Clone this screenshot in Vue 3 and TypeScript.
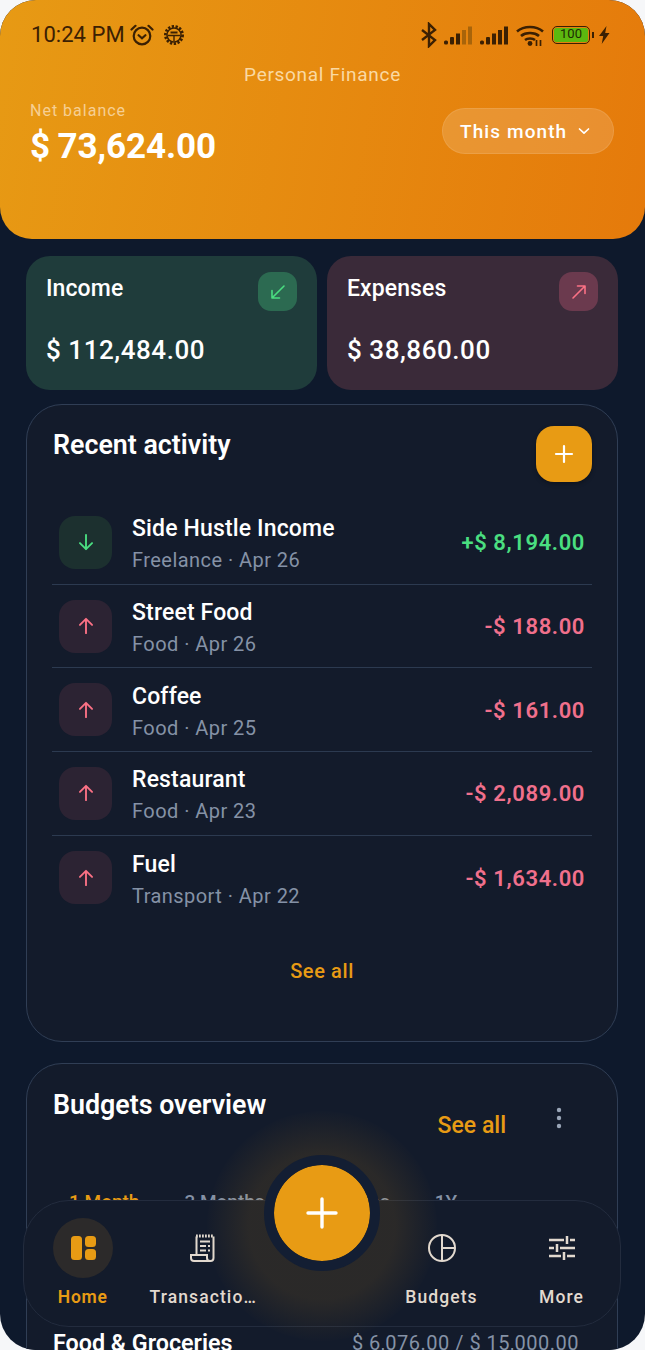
<script setup lang="ts">
interface Tx { name: string; sub: string; amount: string; income: boolean }
const txs: Tx[] = [
  { name: 'Side Hustle Income', sub: 'Freelance · Apr 26', amount: '+$ 8,194.00', income: true },
  { name: 'Street Food', sub: 'Food · Apr 26', amount: '-$ 188.00', income: false },
  { name: 'Coffee', sub: 'Food · Apr 25', amount: '-$ 161.00', income: false },
  { name: 'Restaurant', sub: 'Food · Apr 23', amount: '-$ 2,089.00', income: false },
  { name: 'Fuel', sub: 'Transport · Apr 22', amount: '-$ 1,634.00', income: false },
]
</script>

<template>
  <div class="phone">
    <header class="hero">
      <div class="status">
        <span class="time">10:24 PM</span>
        <svg class="alarm" width="24" height="24" viewBox="0 0 24 24" fill="none" stroke="#3b2003" stroke-width="2.2">
          <circle cx="12" cy="13" r="8.300" />
          <path d="M8.600 12.200 12 15.200l3.400-3M1.500 6.500 5.500 2.800M22.500 6.500l-4-3.700" stroke-linecap="round" />
        </svg>
        <svg class="bug" width="22" height="22" viewBox="0 0 22 22" fill="none" stroke="#3b2003">
          <circle cx="11" cy="11" r="8.600" stroke-width="2.800" stroke-dasharray="2.300 1.500" />
          <circle cx="11" cy="11" r="7" stroke-width="1.500" />
          <path d="M5 11.500h12" stroke-width="1.500" />
          <path d="M11 11.500V17" stroke-width="1.400" />
          <path d="M7.500 8.500h7" stroke-width="2.200" />
        </svg>
        <span class="grow"></span>
        <svg width="18" height="26" viewBox="0 0 18 26" fill="none" stroke="#3b2003" stroke-width="2.400">
          <path d="M2 8l13 10-6 6V2l6 6L2 18" />
        </svg>
        <svg class="sig" width="28" height="19" viewBox="0 0 28 19">
          <rect x="0" y="14.500" width="4" height="4" rx="1.500" fill="#3b2003" />
          <rect x="6" y="11" width="4" height="7.500" rx="1" fill="#3b2003" />
          <rect x="12" y="7.500" width="4" height="11" fill="#3b2003" />
          <rect x="18" y="4" width="4" height="14.500" fill="#a8640a" />
          <rect x="24" y="0.500" width="4" height="18" fill="#a8640a" />
        </svg>
        <svg class="sig s2" width="28" height="19" viewBox="0 0 28 19" fill="#3b2003">
          <rect x="0" y="14.500" width="4" height="4" rx="1.500" />
          <rect x="6" y="11" width="4" height="7.500" rx="1" />
          <rect x="12" y="7.500" width="4" height="11" />
          <rect x="18" y="4" width="4" height="14.500" />
          <rect x="24" y="0.500" width="4" height="18" />
        </svg>
        <svg class="wifi" width="28" height="22" viewBox="0 0 28 22" fill="none" stroke="#3b2003" stroke-width="2.600">
          <path d="M1 7.500c7-6 19-6 26 0M5 12c4.500-4 13.500-4 18 0M9 16c2.500-2 7.500-2 10 0" />
          <circle cx="14" cy="19.500" r="2.400" fill="#3b2003" stroke="none" />
          <path d="M20.500 16v6M24.500 16v6" stroke-width="1.700" />
        </svg>
        <div class="bat"><span>100</span></div>
        <span class="nub"></span>
        <svg width="11" height="18" viewBox="0 0 11 18" fill="#3b2003"><path d="M7.500 0 0 10h4.200l-1.500 8L10.500 7H6.200z" /></svg>
      </div>

      <div class="app-title">Personal Finance</div>

      <div class="hero-row">
        <div>
          <div class="net-label">Net balance</div>
          <div class="net-value">$ 73,624.00</div>
        </div>
        <button class="period">
          This month
          <svg width="14" height="14" viewBox="0 0 14 14" fill="none" stroke="#fff" stroke-width="1.700" stroke-linecap="round" stroke-linejoin="round"><path d="M2.500 5 7 9.200 11.500 5" /></svg>
        </button>
      </div>
    </header>

    <section class="stats">
      <div class="stat income">
        <div class="stat-top">
          <span class="stat-label">Income</span>
          <span class="stat-icon">
            <svg width="20" height="20" viewBox="0 0 20 20" fill="none" stroke="#4ade80" stroke-width="1.600" stroke-linecap="round" stroke-linejoin="round"><path d="M16 4 4 16M4 8.500V16h7.500" /></svg>
          </span>
        </div>
        <div class="stat-value">$ 112,484.00</div>
      </div>
      <div class="stat expense">
        <div class="stat-top">
          <span class="stat-label">Expenses</span>
          <span class="stat-icon">
            <svg width="20" height="20" viewBox="0 0 20 20" fill="none" stroke="#fb7185" stroke-width="1.600" stroke-linecap="round" stroke-linejoin="round"><path d="M4 16 16 4M8.500 4H16v7.500" /></svg>
          </span>
        </div>
        <div class="stat-value">$ 38,860.00</div>
      </div>
    </section>

    <section class="card recent">
      <div class="card-head">
        <h2>Recent activity</h2>
        <button class="add">
          <svg width="22" height="22" viewBox="0 0 22 22" fill="none" stroke="#fff" stroke-width="2.200" stroke-linecap="round"><path d="M11 3v16M3 11h16" /></svg>
        </button>
      </div>
      <ul class="list">
        <li v-for="t in txs" :key="t.name" class="row">
          <span class="tx-icon" :class="t.income ? 'in' : 'out'">
            <svg width="22" height="22" viewBox="0 0 20 20" fill="none" :stroke="t.income ? '#4ade80' : '#fb7185'" stroke-width="1.700" stroke-linecap="round" stroke-linejoin="round">
              <path v-if="t.income" d="M10 3.500v13M4.500 11l5.500 5.500 5.500-5.500" />
              <path v-else d="M10 16.500v-13M4.500 9 10 3.500 15.500 9" />
            </svg>
          </span>
          <div class="tx-text">
            <div class="tx-name">{{ t.name }}</div>
            <div class="tx-sub">{{ t.sub }}</div>
          </div>
          <div class="tx-amt" :class="t.income ? 'pos' : 'neg'">{{ t.amount }}</div>
        </li>
      </ul>
      <div class="see-all">See all</div>
    </section>

    <section class="card budgets">
      <div class="b-head">
        <h2>Budgets overview</h2>
        <span class="b-see">See all</span>
        <svg class="dots" width="6" height="24" viewBox="0 0 6 24" fill="#9aa6b8"><circle cx="3" cy="4" r="2.200" /><circle cx="3" cy="12" r="2.200" /><circle cx="3" cy="20" r="2.200" /></svg>
      </div>
      <div class="tabs">
        <span class="tab on">1 Month</span>
        <span class="tab">3 Months</span>
        <span class="tab">6 Months</span>
        <span class="tab">1Y</span>
      </div>
      <div class="b-row">
        <span class="b-name">Food &amp; Groceries</span>
        <span class="b-amt">$ 6,076.00 / $ 15,000.00</span>
      </div>
    </section>

    <nav class="nav">
      <div class="nav-item first">
        <span class="nav-icon active">
          <svg width="26" height="26" viewBox="0 0 26 26" fill="#e89b14">
            <rect x="1" y="1" width="11" height="24" rx="3.500" />
            <rect x="15" y="1" width="11" height="11" rx="3.500" />
            <rect x="15" y="14" width="11" height="11" rx="3.500" />
          </svg>
        </span>
        <span class="nav-label on">Home</span>
      </div>
      <div class="nav-item second">
        <span class="nav-icon">
          <svg width="26" height="28" viewBox="0 0 26 28" fill="none" stroke="#e2d9cf" stroke-width="2">
            <path d="M6.500 2.500V21M23.500 2.500V24a3 3 0 0 1-3 3H4a3 3 0 0 1-3-3v-3h16v3a3 3 0 0 0 3 3" />
            <path d="M6 2h18" stroke-width="3" stroke-dasharray="1.800 1.200" />
            <path d="M10 7.500h10M10 12h6M18 12h2M10 16.500h6M18 16.500h2" />
          </svg>
        </span>
        <span class="nav-label">Transactio…</span>
      </div>
      <div class="nav-gap"></div>
      <div class="nav-item third">
        <span class="nav-icon">
          <svg width="30" height="30" viewBox="0 0 30 30" fill="none" stroke="#e2d9cf" stroke-width="2">
            <circle cx="15" cy="15" r="13" />
            <path d="M15 2v26M15 15h13" />
          </svg>
        </span>
        <span class="nav-label">Budgets</span>
      </div>
      <div class="nav-item fourth">
        <span class="nav-icon">
          <svg width="28" height="26" viewBox="0 0 28 26" fill="none" stroke="#e2d9cf" stroke-width="2.500">
            <path d="M1 5h15M22 5h5M19 1v8M1 13h5M12 13h15M9 9v8M1 21h12M19 21h8M16 17v8" />
          </svg>
        </span>
        <span class="nav-label">More</span>
      </div>
    </nav>

    <div class="fab-glow"></div>
    <button class="fab">
      <svg width="36" height="36" viewBox="0 0 36 36" fill="none" stroke="#fff" stroke-width="3.400" stroke-linecap="round"><path d="M18 4v28M4 18h28" /></svg>
    </button>
  </div>
</template>

<style scoped>
.phone {
  position: relative;
  width: 645px;
  height: 1350px;
  overflow: hidden;
  border-radius: 36px;
  background: #0e192c;
  font-family: Roboto, "Liberation Sans", sans-serif;
  color: #fff;
}
.hero {
  height: 239px;
  box-sizing: border-box;
  padding: 20px 35px 0 30px;
  border-radius: 0 0 32px 32px;
  background: linear-gradient(100deg, #e79a14 0%, #e57a0b 100%);
}
.status { display: flex; align-items: center; height: 30px; color: #3b2003; }
.time { font-size: 22px; line-height: 30px; margin-left: 1px; letter-spacing: 0.05px; }
.alarm { margin-left: 5px; }
.bug { margin-left: 9px; }
.grow { flex: 1; }
.sig { margin-left: 6px; }
.sig.s2 { margin-left: 8px; }
.wifi { margin-left: 8px; }
.bat {
  margin-left: 8px;
  width: 38px;
  height: 18px;
  box-sizing: border-box;
  border: 1.800px solid #3b2003;
  border-radius: 5px;
  padding: 1px;
  display: flex;
}
.bat span {
  flex: 1;
  background: #5cb80f;
  border-radius: 2px;
  color: #1d2b04;
  font-size: 13px;
  line-height: 12px;
  text-align: center;
}
.nub { width: 2px; height: 6px; background: #3b2003; margin: 0 5px 0 2px; }
.app-title {
  margin-top: 12px;
  text-align: center;
  margin-right: -5px;
  font-size: 19px;
  line-height: 26px;
  letter-spacing: 0.7px;
  color: #fad9a3;
}
.hero-row { display: flex; justify-content: space-between; align-items: flex-start; }
.net-label {
  margin-top: 13px;
  font-size: 16px;
  line-height: 20px;
  letter-spacing: 1px;
  color: #f6cf94;
}
.net-value { margin-top: 4px; font-size: 35px; line-height: 44px; font-weight: 700; letter-spacing: -0.1px; word-spacing: -1px; }
.period {
  display: flex;
  align-items: center;
  gap: 10px;
  width: 172px;
  height: 46px;
  box-sizing: border-box;
  margin: 20px -4px 0 0;
  padding: 0 17px;
  border: 1px solid rgba(255, 255, 255, 0.1);
  border-radius: 23px;
  background: rgba(255, 255, 255, 0.15);
  color: #fff;
  font: 500 19px Roboto, sans-serif;
  letter-spacing: 1.1px;
  white-space: nowrap;
}
.stats { display: flex; gap: 10px; margin: 17px 27px 0 26px; }
.stat { flex: 1; height: 134px; box-sizing: border-box; padding: 16px 20px; border-radius: 24px; }
.income { background: #1f3c3b; }
.expense { background: #3a2a39; }
.stat-top { display: flex; justify-content: space-between; align-items: flex-start; }
.stat-label { margin-top: 1px; font-size: 23px; line-height: 32px; font-weight: 500; letter-spacing: 0.1px; }
.stat-icon {
  display: flex;
  align-items: center;
  justify-content: center;
  width: 39px;
  height: 39px;
  border-radius: 13px;
}
.income .stat-icon { background: #2c6a51; }
.expense .stat-icon { background: #6b3a4e; }
.stat-value { margin-top: 21px; font-size: 26px; line-height: 36px; font-weight: 500; letter-spacing: 0.55px; }
.card {
  box-sizing: border-box;
  margin: 0 27px 0 26px;
  border: 1.500px solid #303e55;
  border-radius: 36px;
  background: #131b2b;
}
.recent { height: 638px; margin-top: 14px; padding: 21px 25px 0 25px; }
.card-head { display: flex; justify-content: space-between; align-items: flex-start; }
h2 { margin: 1px 0 0 1px; font-size: 26.800px; line-height: 38px; font-weight: 600; }
.card-head h2 { margin-top: 0; }
.add {
  width: 56px;
  height: 56px;
  border: 0;
  border-radius: 18px;
  background: #e89b14;
  display: flex;
  align-items: center;
  justify-content: center;
  box-shadow: 0 2px 4px rgba(0, 0, 0, 0.3);
}
.list { list-style: none; margin: 19px 0 0; padding: 0; }
.row {
  display: flex;
  align-items: center;
  height: 83.700px;
  box-sizing: border-box;
  padding: 0 7px 0 7px;
  border-bottom: 1.500px solid #2c3a50;
}
.row:last-child { border-bottom: 0; }
.tx-icon {
  display: flex;
  align-items: center;
  justify-content: center;
  width: 53px;
  height: 53px;
  border-radius: 16px;
  flex: none;
}
.tx-icon.in { background: #1c302f; }
.tx-icon.out { background: #2c2333; }
.tx-text { margin-left: 20px; flex: 1; padding-top: 2px; }
.tx-name { font-size: 23px; line-height: 30px; font-weight: 500; letter-spacing: 0.15px; margin-top: 1px; }
.tx-sub { margin-top: 3px; font-size: 20px; line-height: 26px; color: #8592a6; letter-spacing: 0.45px; }
.tx-amt { padding-top: 1px; font-size: 22px; font-weight: 600; letter-spacing: 0.6px; }
.pos { color: #4ade80; }
.neg { color: #f0708c; }
.see-all {
  margin-top: 39px;
  text-align: center;
  font-size: 20px;
  line-height: 26px;
  font-weight: 500;
  letter-spacing: 0.6px;
  color: #e89b14;
}
.budgets { height: 400px; margin-top: 21px; padding: 21px 25px 0 25px; }
.b-head { display: flex; align-items: flex-start; }
.b-head h2 { flex: 1; }
.b-see { margin: 25px 50px 0 0; font-size: 23px; line-height: 32px; font-weight: 500; color: #e89b14; }
.dots { margin: 21px 30px 0 0; }
.tabs { display: flex; margin-top: 47px; padding-left: 17px; }
.tab { font-size: 19px; line-height: 26px; font-weight: 500; color: #8592a6; margin-right: 45px; white-space: nowrap; }
.tab.on { color: #e89b14; }
.b-row { display: flex; justify-content: space-between; margin-top: 113px; }
.b-name { margin-left: 1px; font-size: 23.300px; line-height: 30px; font-weight: 600; }
.b-amt { font-size: 20px; line-height: 30px; color: #8592a6; letter-spacing: 0.5px; margin-right: 13px; }
.nav {
  position: absolute;
  left: 23px;
  top: 1200px;
  width: 598px;
  height: 127px;
  box-sizing: border-box;
  display: flex;
  border: 1.500px solid #232c3e;
  border-radius: 46px;
  background: #131b2b;
}
.nav-item { display: flex; flex-direction: column; align-items: center; flex: none; padding-top: 17px; }
.first { width: 117.500px; }
.second { width: 123.500px; }
.nav-gap { width: 116.500px; flex: none; }
.third { width: 120px; }
.fourth { width: 120px; }
.nav-icon {
  width: 60px;
  height: 60px;
  border-radius: 50%;
  display: flex;
  align-items: center;
  justify-content: center;
}
.nav-icon.active { background: #2c2a2a; }
.nav-label {
  margin-top: 8px;
  font-size: 17.500px;
  line-height: 22px;
  letter-spacing: 1.100px;
  font-weight: 500;
  color: #e2d9cf;
  white-space: nowrap;
}
.nav-label.on { color: #e89b14; font-weight: 600; letter-spacing: 0.8px; }
.fab-glow {
  position: absolute;
  left: 207px;
  top: 1111px;
  width: 230px;
  height: 230px;
  border-radius: 50%;
  background: radial-gradient(circle, rgba(232, 155, 20, 0.11) 45%, rgba(232, 155, 20, 0) 72%);
}
.fab {
  position: absolute;
  left: 264px;
  top: 1155px;
  width: 116px;
  height: 116px;
  box-sizing: border-box;
  border: 10px solid #131e33;
  border-radius: 50%;
  background: #e89b14;
  background-clip: padding-box;
  display: flex;
  align-items: center;
  justify-content: center;
  padding: 0;
}
</style>

<style>
html, body { background: #f6f7f9; }
</style>
